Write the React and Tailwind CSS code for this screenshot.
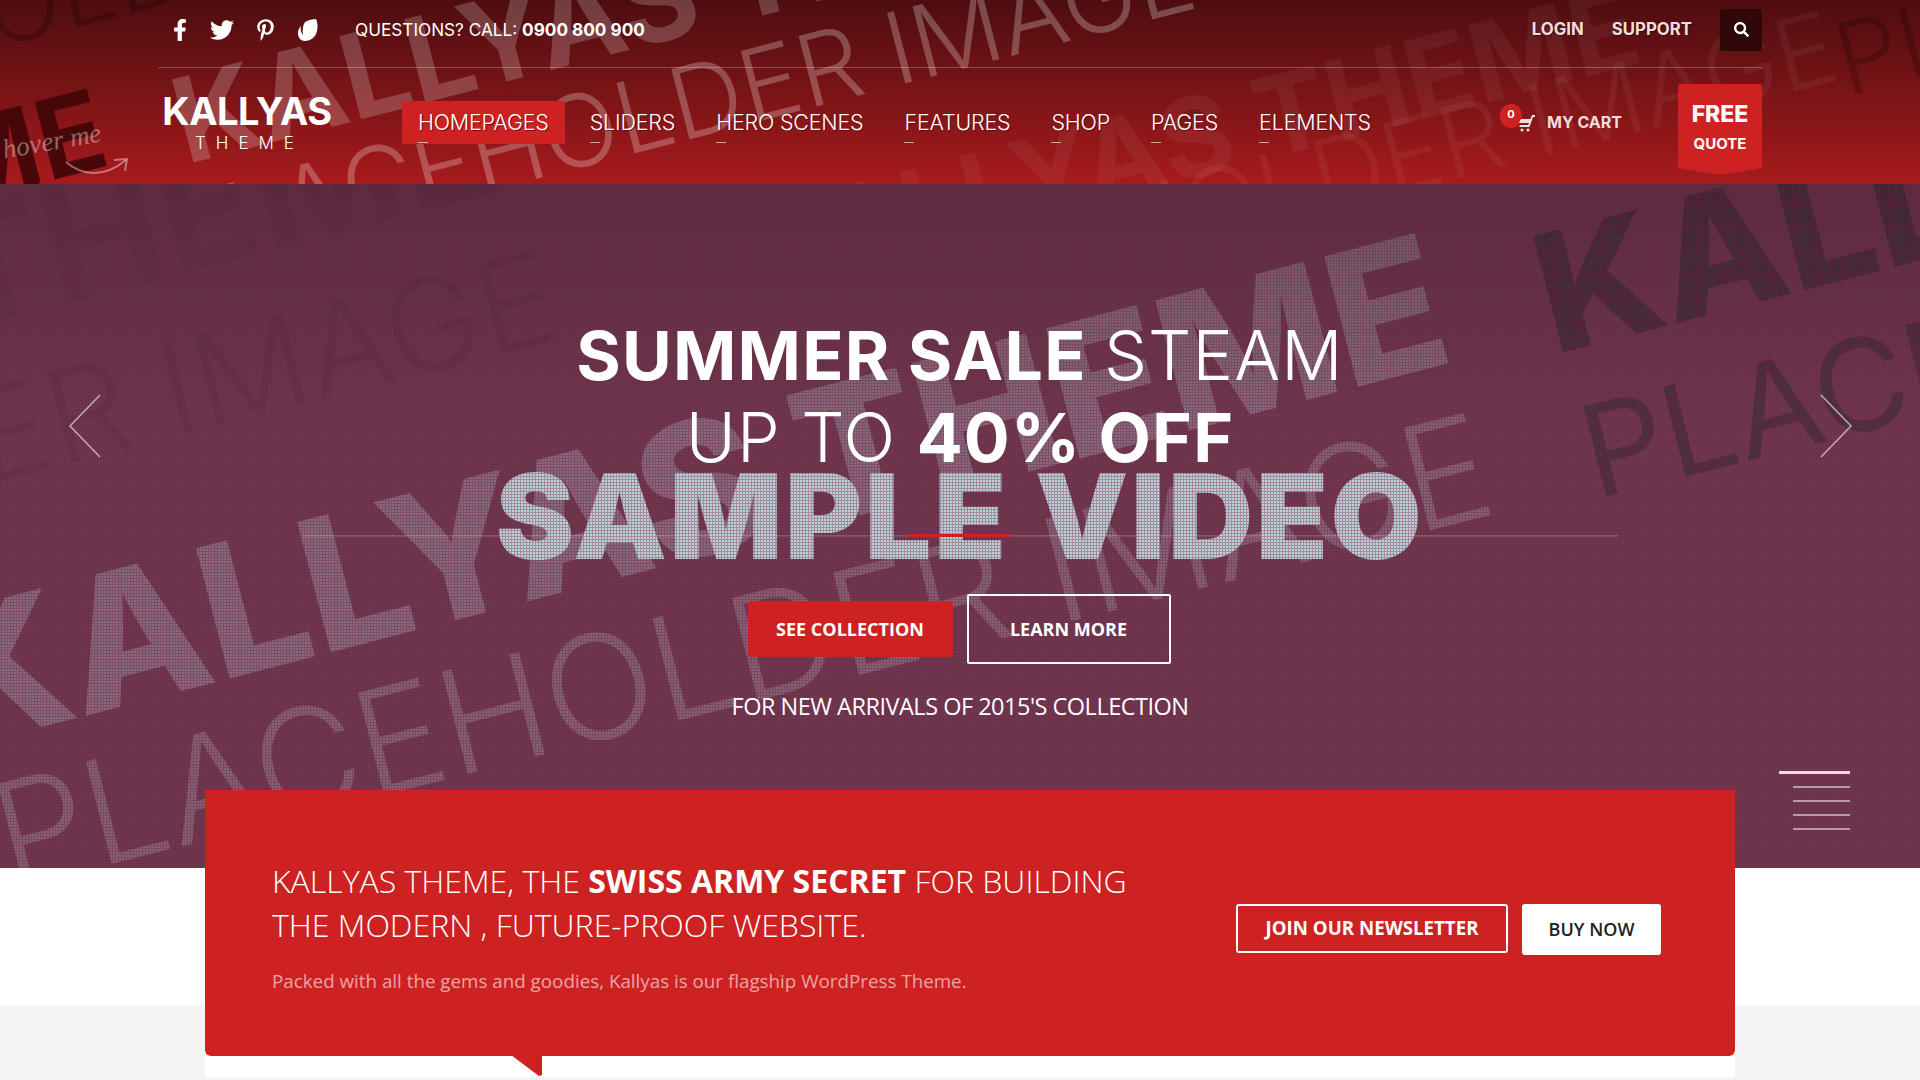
import React from "react";
import { FaFacebookF, FaTwitter, FaPinterestP, FaSearch } from "react-icons/fa";

const navItems = [
  { label: "HOMEPAGES", active: true },
  { label: "SLIDERS" },
  { label: "HERO SCENES" },
  { label: "FEATURES" },
  { label: "SHOP" },
  { label: "PAGES" },
  { label: "ELEMENTS" },
];

const HeaderWatermarks = () => (
  <>
    <span className="absolute left-[190px] top-[62px] origin-bottom-left -rotate-[14.5deg] whitespace-nowrap text-[118px] font-bold leading-none text-white/20">
      KALLYAS THEME
    </span>
    <span className="absolute left-[178px] top-[186px] origin-bottom-left -rotate-[14.5deg] whitespace-nowrap text-[100px] font-light leading-none text-white/25">
      PLACEHOLDER IMAGE
    </span>
    <span className="absolute left-[760px] top-[196px] origin-bottom-left -rotate-[14.5deg] whitespace-nowrap text-[110px] font-bold leading-none text-white/5">
      KALLYAS THEME
    </span>
    <span className="absolute left-[820px] top-[258px] origin-bottom-left -rotate-[14.5deg] whitespace-nowrap text-[100px] font-light leading-none text-white/5">
      PLACEHOLDER IMAGE
    </span>
    <span className="absolute left-[-263px] top-[167px] origin-bottom-left -rotate-[14.5deg] whitespace-nowrap text-[110px] font-bold leading-none text-[#3f0507]/90">
      THEME
    </span>
    <span className="absolute left-[-380px] top-[60px] origin-bottom-left -rotate-[14.5deg] whitespace-nowrap text-[100px] font-light leading-none text-black/20">
      PLACEHOLDER
    </span>
    <span className="absolute left-[1850px] top-[10px] origin-bottom-left -rotate-[14.5deg] whitespace-nowrap text-[100px] font-light leading-none text-black/20">
      PLACEHOLDER
    </span>
    <span className="absolute left-[2px] top-[128px] -rotate-[10deg] whitespace-nowrap font-['Liberation_Serif',serif] text-[27px] italic leading-none text-white/40">
      hover me
    </span>
    <svg className="absolute left-[64px] top-[158px] text-white/40" width="68" height="24" viewBox="0 0 68 24" fill="none" stroke="currentColor" strokeWidth="2">
      <path d="M2 4c14 12 36 18 60-2" />
      <path d="M50 2l13-1-2 12" />
    </svg>
  </>
);

const HeroWatermarks = () => (
  <>
    <span className="absolute left-[-44px] top-[407px] z-0 origin-bottom-left -rotate-[14.5deg] whitespace-nowrap text-[185px] font-extrabold leading-none text-[#b8c8d0]/35">
      KALLYAS THEME
    </span>
    <span className="absolute left-[15px] top-[580px] z-0 origin-bottom-left -rotate-[14.2deg] whitespace-nowrap text-[145px] font-light leading-none text-[#b8c8d0]/30">
      PLACEHOLDER IMAGE
    </span>
    <span className="absolute left-[1560px] top-[28px] z-0 origin-bottom-left -rotate-[14.5deg] whitespace-nowrap text-[165px] font-extrabold leading-none text-[#2c2a33]/60">
      KALLYAS THEME
    </span>
    <span className="absolute left-[1600px] top-[205px] z-0 origin-bottom-left -rotate-[14.2deg] whitespace-nowrap text-[128px] font-normal leading-none text-[#2c2a33]/55">
      PLACEHOLDER IMAGE
    </span>
    <span className="absolute left-[-40px] top-[10px] z-0 origin-bottom-left -rotate-[14.5deg] whitespace-nowrap text-[160px] font-bold leading-none text-black/5">
      THEME
    </span>
    <span className="absolute left-[-10px] top-[190px] z-0 origin-bottom-left -rotate-[14.2deg] whitespace-nowrap text-[128px] font-light leading-none text-black/[0.07]">
      ER IMAGE
    </span>
  </>
);

const Header = () => (
  <header className="relative h-[184px] overflow-hidden bg-gradient-to-b from-[#4e0d10] to-[#a81a1c]">
    <HeaderWatermarks />
    <div className="relative z-10 mx-auto w-[1604px]">
      <div className="flex h-[68px] items-center border-b border-white/25 pb-[8px]">
        <div className="ml-[15px] flex items-center gap-[21px] text-white">
          <FaFacebookF className="h-[22px] w-[14px]" />
          <FaTwitter className="h-[24px] w-[28px]" />
          <FaPinterestP className="h-[22px] w-[17px]" />
          <svg className="ml-[2px]" width="22" height="22" viewBox="0 0 22 22" fill="currentColor">
            <path d="M8 3c3-2 8-3 11-3 2 4 2 10 0 15-2 4-6 7-11 7-5 0-7-4-7-8 0-3 1-5 3-7-1 3 0 7 2 9-1-5 0-10 2-13z" />
          </svg>
        </div>
        <p className="ml-[36px] text-[17.200px] text-white">
          QUESTIONS? CALL: <span className="font-bold">0900 800 900</span>
        </p>
        <div className="ml-auto flex items-center text-[16.800px] font-bold text-[#f0dede] [text-shadow:1px_1px_0_rgba(0,0,0,0.45)]">
          <span>LOGIN</span>
          <span className="ml-[28px]">SUPPORT</span>
          <span className="ml-[28px] flex h-[42px] w-[42px] items-center justify-center rounded-[2px] bg-[#2f0808] text-white">
            <FaSearch className="h-[15px] w-[15px]" />
          </span>
        </div>
      </div>

      <div className="flex h-[116px] items-start">
        <div className="mt-[21px] ml-[3px] w-[172px] text-center text-white">
          <div className="text-[38px] font-bold leading-[44px] tracking-[-0.5px]">KALLYAS</div>
          <div className="pl-[5px] text-[17px] font-light leading-[20px] tracking-[10px]">THEME</div>
        </div>
        <nav className="mt-[33px] ml-[69px] flex items-start text-[21.500px] font-light tracking-[-0.2px] text-white [text-shadow:1px_1px_0_rgba(90,0,0,0.7)]">
          {navItems.map((item) => (
            <a
              key={item.label}
              className={`relative mr-[9px] flex h-[43px] items-center rounded-[2px] px-[16px] ${
                item.active ? "bg-[#cd2122]" : ""
              }`}
            >
              {item.label}
              <span className="absolute bottom-[1px] left-[16px] h-px w-[10px] bg-white/60" />
            </a>
          ))}
        </nav>
        <div className="ml-auto mt-[16px] flex items-start">
          <div className="relative mt-[28px] text-[16px] font-bold leading-[20px] text-[#f0dede]">
            <span className="absolute left-[-47px] top-[-8px] flex h-[24px] w-[22px] items-start justify-center rounded-full bg-[#cd2122] pt-[3px] text-[11px] leading-[14px] text-white">
              0
            </span>
            <svg className="absolute left-[-28px] top-[3px]" width="16" height="17" viewBox="0 0 16 17" fill="currentColor">
              <path d="M16 0h-3l-1.500 4H2L0 8h10l-1 2H1L0 12h10.500L14 2h2zM3 13.500a1.500 1.500 0 1 0 0 3 1.500 1.500 0 0 0 0-3zM9 13.500a1.500 1.500 0 1 0 0 3 1.500 1.500 0 0 0 0-3z" />
            </svg>
            MY CART
          </div>
          <div className="relative ml-[56px] flex h-[84px] w-[84px] flex-col items-center rounded-t-[2px] bg-[#cd2122] pt-[15px] text-white">
            <span className="text-[23px] font-extrabold leading-[30px]">FREE</span>
            <span className="mt-[5px] text-[15px] font-bold leading-[20px]">QUOTE</span>
            <span className="absolute left-0 top-full h-0 w-0 border-x-[42px] border-t-[7px] border-x-transparent border-t-[#cd2122]" />
          </div>
        </div>
      </div>
    </div>
  </header>
);

const Hero = () => (
  <section className="relative h-[684px] overflow-hidden bg-[#6b3a4e]">
    <HeroWatermarks />
    <div className="absolute inset-0 z-[1] bg-gradient-to-b from-black/20 to-transparent to-[35%]" />
    <div className="absolute left-[303px] top-[351px] z-[1] h-[2px] w-[1315px] bg-white/20" />
    <div className="absolute left-[908px] top-[350px] z-[3] h-[3px] w-[102px] bg-[#cd2122]" />
    <div className="flex flex-col items-center pt-[130px]">
      <h1 className="relative z-10 text-[68px] font-bold leading-[82px] tracking-[1.2px] text-white">
        SUMMER SALE <span className="font-light">STEAM</span>
      </h1>
      <h2 className="relative z-10 text-[68px] font-light leading-[82px] tracking-[1.2px] text-white">
        UP TO <span className="font-bold">40% OFF</span>
      </h2>
      <div className="relative z-[1] mt-[-17px] text-[118px] font-black leading-[110px] tracking-[2.5px] text-[#bcd4d8]">
        SAMPLE VIDEO
      </div>
      <div className="relative z-10 mt-[23px] ml-[-2px] flex items-center gap-[14px] font-['Open_Sans',sans-serif] text-[18px] font-bold text-white">
        <a className="flex h-[56px] w-[205px] items-center justify-center rounded-[3px] bg-[#cd2122]">SEE COLLECTION</a>
        <a className="flex h-[70px] w-[204px] items-center justify-center rounded-[2px] border-2 border-white">LEARN MORE</a>
      </div>
      <p className="relative z-10 mt-[26px] font-['Open_Sans',sans-serif] text-[23.500px] leading-[32px] tracking-[-0.5px] text-white">
        FOR NEW ARRIVALS OF 2015&apos;S COLLECTION
      </p>
    </div>
    <div className="absolute inset-0 z-[2] bg-[radial-gradient(rgba(120,30,70,0.4)_1px,transparent_1.2px)] bg-size-[3px_3px]" />
    <svg className="absolute left-[68px] top-[210px] z-10 text-white/60" width="34" height="64" viewBox="0 0 34 64" fill="none" stroke="currentColor" strokeWidth="1.500">
      <path d="M32 1 2 32l30 31" />
    </svg>
    <svg className="absolute left-[1819px] top-[210px] z-10 text-white/60" width="34" height="64" viewBox="0 0 34 64" fill="none" stroke="currentColor" strokeWidth="1.500">
      <path d="M2 1l30 31L2 63" />
    </svg>
    <div className="absolute left-[1779px] top-[587px] z-10 flex w-[71px] flex-col items-end gap-[12px]">
      <span className="h-[3px] w-full bg-[#eadfe6]" />
      <span className="h-[2px] w-[57px] bg-white/50" />
      <span className="h-[2px] w-[57px] bg-white/50" />
      <span className="h-[2px] w-[57px] bg-white/50" />
      <span className="h-[2px] w-[57px] bg-white/50" />
    </div>
  </section>
);

const CallToAction = () => (
  <section className="relative z-20 h-[212px] bg-[linear-gradient(to_bottom,white_137px,#f4f4f4_137px)]">
    <div className="relative ml-[205px] flow-root h-[209px] w-[1530px] bg-white">
      <div className="relative mt-[-78px] flex h-[266px] items-start rounded-b-[6px] bg-[#cd2122] pl-[67px] font-['Open_Sans',sans-serif] text-white">
        <div className="pt-[69px]">
          <p className="text-[32px] font-light leading-[44px]">
            KALLYAS THEME, THE <span className="font-bold">SWISS ARMY SECRET</span> FOR BUILDING
            <br />
            THE MODERN , FUTURE-PROOF WEBSITE.
          </p>
          <p className="mt-[22px] text-[18.800px] leading-[24px] text-white/60">
            Packed with all the gems and goodies, Kallyas is our flagship WordPress Theme.
          </p>
        </div>
        <div className="absolute left-[1031px] top-[114px] flex items-start gap-[14px] text-[18.700px] font-bold">
          <a className="flex h-[49px] w-[272px] items-center justify-center rounded-[3px] border-2 border-white">JOIN OUR NEWSLETTER</a>
          <a className="flex h-[51px] w-[139px] items-center justify-center rounded-[3px] bg-white text-[18px] font-semibold text-[#222]">BUY NOW</a>
        </div>
        <svg className="absolute left-[306px] top-[265px]" width="32" height="22" viewBox="0 0 32 22" fill="#cd2122">
          <path d="M0 0h31v20l-3 1z" />
        </svg>
      </div>
    </div>
  </section>
);

const App = () => (
  <div className="h-[1080px] w-full overflow-hidden bg-white font-[Inter,sans-serif]">
    <Header />
    <Hero />
    <CallToAction />
  </div>
);

export default App;
